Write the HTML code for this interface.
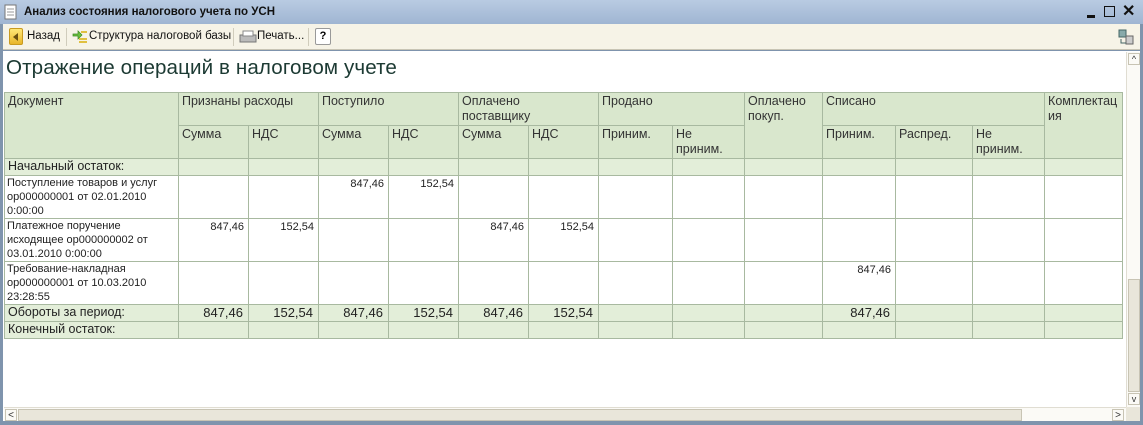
<!DOCTYPE html>
<html><head><meta charset="utf-8"><style>
*{margin:0;padding:0;box-sizing:border-box}
body{width:1143px;height:425px;overflow:hidden;background:#7f94ad;font-family:"Liberation Sans","Noto Sans CJK SC",sans-serif;position:relative}
.title{position:absolute;left:0;top:0;width:1143px;height:24px;background:linear-gradient(#b9cbe2,#9fb5d2);}
.title .t{position:absolute;left:24px;top:6px;font-size:11.5px;font-weight:bold;color:#111}
.tb{position:absolute;left:3px;top:24px;width:1137px;height:26px;background:#f6f3e7;border-bottom:1px solid #c8c4b4}
.tb span{position:absolute;top:6px;font-size:11.5px;color:#111}
.sep{position:absolute;top:4px;width:1px;height:18px;background:#d0ccbc}
.content{position:absolute;left:3px;top:51px;width:1137px;height:370px;background:#fff}
h1{position:absolute;left:6px;top:56px;font-size:20.6px;font-weight:normal;color:#1c3a33;letter-spacing:0.1px}
table{position:absolute;left:4px;top:92px;border-collapse:collapse;table-layout:fixed;width:1118px}
td{border:1px solid #a8b9a0;font-size:11px;color:#222;vertical-align:top;padding:0 2px;line-height:14px;overflow:hidden;white-space:nowrap}
tr.h td{background:#d9e7cd;font-size:12.5px;color:#333;line-height:15px;padding:1px 3px 0}
tr.g td{background:#e3eed9;font-size:12.5px;line-height:15px;padding:0 3px}
tr.g td.n{font-size:13px;text-align:right;padding-right:5px}
td.r{text-align:right;padding-right:4px;padding-top:1px}
.vs{position:absolute;left:1126px;top:52px;width:14px;height:356px;background:#fbfaf6;border-left:1px solid #e0ddd2}
.hs{position:absolute;left:4px;top:407px;width:1122px;height:14px;background:#fbfaf6;border-top:1px solid #e0ddd2}
</style></head><body>
<div class="title">
<svg style="position:absolute;left:4px;top:4px" width="14" height="16"><rect x="1" y="1" width="11" height="14" fill="#fff" stroke="#777"/><path d="M3 5h7M3 8h7M3 11h7" stroke="#999"/></svg>
<div class="t">Анализ состояния налогового учета по УСН</div>
<div style="position:absolute;left:1087px;top:15px;width:8px;height:3px;background:#111"></div>
<div style="position:absolute;left:1104px;top:6px;width:11px;height:11px;border:1.5px solid #111"></div>
<div style="position:absolute;left:1122px;top:1px;font-size:16px;font-weight:bold;color:#111">✕</div>
</div>
<div class="tb">
<div style="position:absolute;left:6px;top:4px;width:14px;height:17px;background:linear-gradient(#ffe777,#e8b52a);border:1px solid #c89a20;border-radius:2px"></div>
<div style="position:absolute;left:10px;top:9px;width:0;height:0;border-top:4px solid transparent;border-bottom:4px solid transparent;border-right:5px solid #6a5010"></div>
<span style="left:24px">Назад</span>
<div class="sep" style="left:63px"></div>
<svg style="position:absolute;left:69px;top:5px" width="16" height="16"><path d="M1 5h5V2l4 4-4 4V7H1z" fill="#6bc040" stroke="#3a8a20" stroke-width=".7"/><rect x="7" y="9" width="8" height="2" fill="#e0c040"/><rect x="7" y="12" width="8" height="2" fill="#e0c040"/><rect x="9" y="2" width="6" height="2" fill="#e0c040"/></svg>
<span style="left:86px">Структура налоговой базы</span>
<div class="sep" style="left:230px"></div>
<svg style="position:absolute;left:236px;top:6px" width="18" height="14"><rect x="1" y="5" width="16" height="7" fill="#bbb" stroke="#777"/><rect x="4" y="1" width="10" height="5" fill="#fff" stroke="#888"/></svg>
<span style="left:254px">Печать...</span>
<div class="sep" style="left:305px"></div>
<div style="position:absolute;left:312px;top:4px;width:16px;height:17px;border:1px solid #999;border-radius:2px;background:#fff;font-size:11px;font-weight:bold;text-align:center;line-height:15px">?</div>
<svg style="position:absolute;left:1114px;top:4px" width="18" height="18"><rect x="2" y="2" width="7" height="7" fill="#8aa" stroke="#466"/><rect x="9" y="8" width="7" height="8" fill="#ccc" stroke="#666"/><path d="M4 11v4h5" stroke="#466" fill="none"/></svg>
</div>
<div class="content"></div>
<h1>Отражение операций в налоговом учете</h1>
<table>
<colgroup><col style="width:174px"><col style="width:70px"><col style="width:70px"><col style="width:70px"><col style="width:70px"><col style="width:70px"><col style="width:70px"><col style="width:74px"><col style="width:72px"><col style="width:78px"><col style="width:73px"><col style="width:77px"><col style="width:72px"><col style="width:78px"></colgroup>
<tr class="h" style="height:33px"><td rowspan="2">Документ</td><td colspan="2">Признаны расходы</td><td colspan="2">Поступило</td><td colspan="2">Оплачено<br>поставщику</td><td colspan="2">Продано</td><td rowspan="2">Оплачено<br>покуп.</td><td colspan="3">Списано</td><td rowspan="2">Комплектац<br>ия</td></tr>
<tr class="h" style="height:33px"><td>Сумма</td><td>НДС</td><td>Сумма</td><td>НДС</td><td>Сумма</td><td>НДС</td><td>Приним.</td><td>Не<br>приним.</td><td>Приним.</td><td>Распред.</td><td>Не<br>приним.</td></tr>
<tr class="g" style="height:17px"><td>Начальный остаток:</td><td></td><td></td><td></td><td></td><td></td><td></td><td></td><td></td><td></td><td></td><td></td><td></td><td></td></tr>
<tr style="height:43px"><td>Поступление товаров и услуг<br>ор000000001 от 02.01.2010<br>0:00:00</td><td></td><td></td><td class="r">847,46</td><td class="r">152,54</td><td></td><td></td><td></td><td></td><td></td><td></td><td></td><td></td><td></td></tr>
<tr style="height:43px"><td>Платежное поручение<br>исходящее ор000000002 от<br>03.01.2010 0:00:00</td><td class="r">847,46</td><td class="r">152,54</td><td></td><td></td><td class="r">847,46</td><td class="r">152,54</td><td></td><td></td><td></td><td></td><td></td><td></td><td></td></tr>
<tr style="height:43px"><td>Требование-накладная<br>ор000000001 от 10.03.2010<br>23:28:55</td><td></td><td></td><td></td><td></td><td></td><td></td><td></td><td></td><td></td><td class="r">847,46</td><td></td><td></td><td></td></tr>
<tr class="g" style="height:17px"><td>Обороты за период:</td><td class="n">847,46</td><td class="n">152,54</td><td class="n">847,46</td><td class="n">152,54</td><td class="n">847,46</td><td class="n">152,54</td><td></td><td></td><td></td><td class="n">847,46</td><td></td><td></td><td></td></tr>
<tr class="g" style="height:17px"><td>Конечный остаток:</td><td></td><td></td><td></td><td></td><td></td><td></td><td></td><td></td><td></td><td></td><td></td><td></td><td></td></tr>
</table>
<div class="vs">
<div style="position:absolute;left:1px;top:1px;width:12px;height:12px;border:1px solid #c8c4b4;font-size:9px;text-align:center;line-height:11px;color:#333">^</div>
<div style="position:absolute;left:1px;top:227px;width:12px;height:113px;background:#e9e6da;border:1px solid #c8c4b4"></div>
<div style="position:absolute;left:1px;top:341px;width:12px;height:12px;border:1px solid #c8c4b4;font-size:9px;text-align:center;line-height:11px;color:#333">v</div>
</div>
<div class="hs">
<div style="position:absolute;left:1px;top:1px;width:12px;height:12px;border:1px solid #c8c4b4;font-size:10px;text-align:center;line-height:11px;color:#333">&lt;</div>
<div style="position:absolute;left:14px;top:1px;width:1004px;height:12px;background:#e9e6da;border:1px solid #c8c4b4"></div>
<div style="position:absolute;left:1108px;top:1px;width:12px;height:12px;border:1px solid #c8c4b4;font-size:10px;text-align:center;line-height:11px;color:#333">&gt;</div>
</div>
<div style="position:absolute;left:1126px;top:407px;width:14px;height:14px;background:#e9e6da"></div>
</body></html>
